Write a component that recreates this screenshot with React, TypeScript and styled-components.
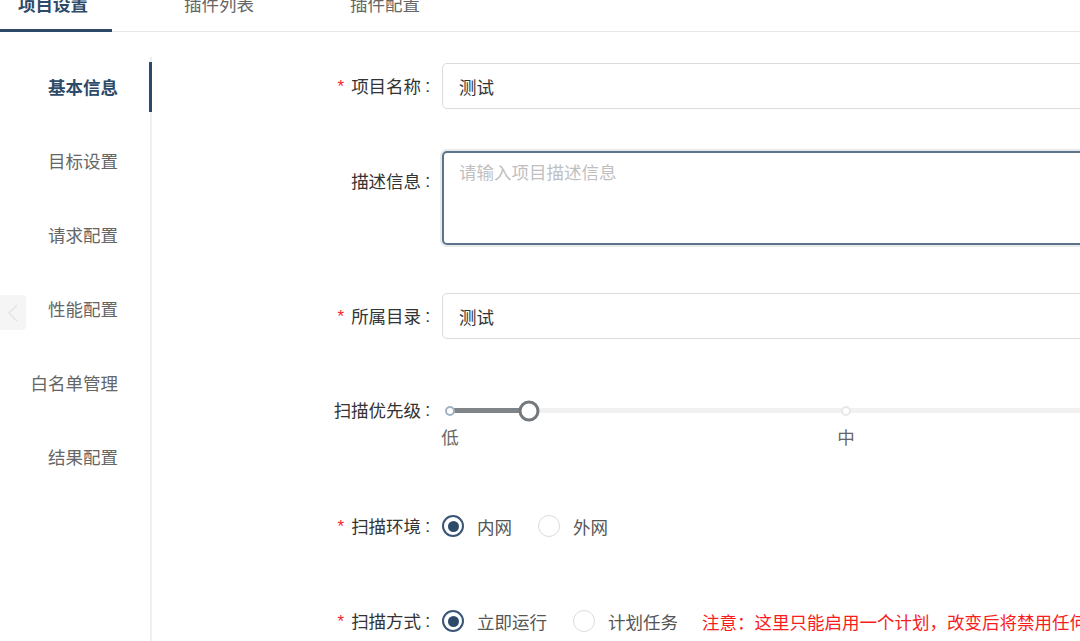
import React from "react";
import styled, { createGlobalStyle, css } from "styled-components";

const GlobalStyle = createGlobalStyle`
  html, body {
    margin: 0;
    padding: 0;
    background: #ffffff;
    overflow: hidden;
    font-family: "Noto Sans CJK SC", "Noto Sans", sans-serif;
  }
  * { box-sizing: border-box; }
`;

const ACCENT = "#2e4a69";
const FS = "17.5px";

const Page = styled.div`
  width: 1080px;
  height: 641px;
  display: flex;
  flex-direction: column;
  overflow: hidden;
`;

const TabBar = styled.div`
  display: flex;
  height: 46px;
  margin-top: -14px;
  border-bottom: 1px solid #e8e8e8;
  flex-shrink: 0;
`;

const Tab = styled.div<{ $active?: boolean }>`
  position: relative;
  padding: 0 24px 0 18px;
  margin-right: 54px;
  line-height: 35px;
  font-size: ${FS};
  color: ${(p) => (p.$active ? ACCENT : "#666")};
  font-weight: ${(p) => (p.$active ? 700 : 400)};
  white-space: nowrap;
  ${(p) =>
    p.$active &&
    css`
      &::after {
        content: "";
        position: absolute;
        left: 0;
        right: 0;
        bottom: -1px;
        height: 3px;
        background: ${ACCENT};
      }
    `}
`;

const Body = styled.div`
  position: relative;
  flex: 1;
  display: flex;
  padding-top: 25px;
`;

const CollapseButton = styled.div`
  position: absolute;
  left: 0;
  top: 263px;
  width: 26px;
  height: 35px;
  background: #f5f5f5;
  border-radius: 0 4px 4px 0;
  display: flex;
  align-items: center;
  justify-content: center;
`;

const SideMenu = styled.div`
  width: 152px;
  flex-shrink: 0;
  border-right: 2px solid #efefef;
  padding-top: 5px;
  display: flex;
  flex-direction: column;
  gap: 24px;
`;

const MenuItem = styled.div<{ $active?: boolean }>`
  position: relative;
  height: 50px;
  line-height: 50px;
  text-align: right;
  padding-right: 32px;
  font-size: ${FS};
  white-space: nowrap;
  color: ${(p) => (p.$active ? ACCENT : "#666")};
  font-weight: ${(p) => (p.$active ? 700 : 400)};
  ${(p) =>
    p.$active &&
    css`
      &::after {
        content: "";
        position: absolute;
        right: -2px;
        top: 0;
        width: 3px;
        height: 50px;
        background: ${ACCENT};
      }
    `}
`;

const Form = styled.div`
  display: flex;
  flex-direction: column;
  padding-top: 6px;
`;

const FormItem = styled.div<{ $mt: number }>`
  display: flex;
  align-items: flex-start;
  margin-top: ${(p) => p.$mt}px;
`;

const Label = styled.div<{ $lh: number; $pt?: number }>`
  width: 290px;
  flex-shrink: 0;
  display: flex;
  justify-content: flex-end;
  align-items: center;
  padding-right: 12px;
  padding-top: ${(p) => p.$pt ?? 0}px;
  line-height: ${(p) => p.$lh}px;
  height: ${(p) => p.$lh + (p.$pt ?? 0)}px;
  font-size: ${FS};
  color: #333;
  white-space: nowrap;
`;

const Required = styled.span`
  color: #f5222d;
  font-family: "Liberation Sans", sans-serif;
  font-size: 17px;
  margin-right: 7px;
  position: relative;
  top: 1px;
`;

const Colon = styled.span`
  margin-left: 4px;
  font-family: "Liberation Sans", sans-serif;
`;

const TextInput = styled.input`
  width: 800px;
  height: 46px;
  border: 1px solid #dcdcdc;
  border-radius: 5px;
  padding: 0 16px;
  font-size: ${FS};
  color: #333;
  font-family: "Noto Sans CJK SC", sans-serif;
  background: #fff;
  outline: none;
`;

const TextArea = styled.textarea`
  width: 800px;
  height: 94px;
  border: 2px solid #5d7389;
  box-shadow: 0 0 0 2px rgba(93, 115, 137, 0.15);
  border-radius: 5px;
  padding: 8px 15px;
  font-size: ${FS};
  line-height: 22px;
  font-family: "Noto Sans CJK SC", sans-serif;
  resize: none;
  outline: none;
  color: #333;
  &::placeholder {
    color: #bfbfbf;
  }
`;

const Slider = styled.div`
  width: 808px;
  padding: 0 8px;
`;

const RailBox = styled.div`
  position: relative;
  height: 40px;
`;

const Rail = styled.div`
  position: absolute;
  left: 0;
  right: 0;
  top: 18px;
  height: 5px;
  border-radius: 3px;
  background: #f1f1f1;
`;

const Track = styled.div`
  position: absolute;
  left: 0;
  top: 18px;
  height: 5px;
  border-radius: 3px;
  background: #7f8489;
`;

const Dot = styled.div<{ $active?: boolean }>`
  position: absolute;
  top: 20.5px;
  width: 10px;
  height: 10px;
  border-radius: 50%;
  background: #fff;
  border: 2px solid ${(p) => (p.$active ? "#a3b2c3" : "#e8e8e8")};
  transform: translate(-50%, -50%);
`;

const Handle = styled.div`
  position: absolute;
  top: 20.5px;
  width: 21px;
  height: 21px;
  border-radius: 50%;
  background: #fff;
  border: 3px solid #73787d;
  transform: translate(-50%, -50%);
`;

const Marks = styled.div`
  position: relative;
  height: 20px;
  margin-top: -3px;
`;

const Mark = styled.span`
  position: absolute;
  top: 0;
  line-height: 20px;
  font-size: ${FS};
  color: #666;
  transform: translateX(-50%);
  white-space: nowrap;
`;

const RadioGroup = styled.div`
  display: flex;
  align-items: center;
  height: 40px;
`;

const RadioOption = styled.label`
  display: inline-flex;
  align-items: center;
  gap: 13px;
  margin-right: 26px;
  font-size: ${FS};
  color: #555;
  white-space: nowrap;
`;

const RadioCircle = styled.span<{ $checked?: boolean }>`
  width: 22px;
  height: 22px;
  border-radius: 50%;
  border: ${(p) => (p.$checked ? `2px solid #3a5676` : `1.5px solid #dcdcdc`)};
  display: inline-flex;
  align-items: center;
  justify-content: center;
  background: #fff;
  &::after {
    content: "";
    display: ${(p) => (p.$checked ? "block" : "none")};
    width: 11px;
    height: 11px;
    border-radius: 50%;
    background: ${ACCENT};
  }
`;

const Warning = styled.span`
  font-size: ${FS};
  color: #f81d1d;
  white-space: nowrap;
  margin-left: -2px;
`;

const FieldLabel: React.FC<{ text: string; required?: boolean; lh: number; pt?: number }> = ({
  text,
  required,
  lh,
  pt,
}) => (
  <Label $lh={lh} $pt={pt}>
    {required && <Required>*</Required>}
    {text}
    <Colon>:</Colon>
  </Label>
);

const menu = ["基本信息", "目标设置", "请求配置", "性能配置", "白名单管理", "结果配置"];

export default function App() {
  const value = 10;
  return (
    <Page>
      <GlobalStyle />
      <TabBar>
        <Tab $active>项目设置</Tab>
        <Tab>插件列表</Tab>
        <Tab>插件配置</Tab>
      </TabBar>
      <Body>
        <CollapseButton>
          <svg width="12" height="20" viewBox="0 0 12 20">
            <path d="M10 2 L2 10 L10 18" fill="none" stroke="#e2e2e2" strokeWidth="1.3" />
          </svg>
        </CollapseButton>
        <SideMenu>
          {menu.map((m, i) => (
            <MenuItem key={m} $active={i === 0}>
              {m}
            </MenuItem>
          ))}
        </SideMenu>
        <Form>
          <FormItem $mt={0}>
            <FieldLabel text="项目名称" required lh={46} />
            <TextInput defaultValue="测试" />
          </FormItem>
          <FormItem $mt={42}>
            <FieldLabel text="描述信息" lh={46} pt={7} />
            <TextArea placeholder="请输入项目描述信息" />
          </FormItem>
          <FormItem $mt={48}>
            <FieldLabel text="所属目录" required lh={46} />
            <TextInput defaultValue="测试" />
          </FormItem>
          <FormItem $mt={51}>
            <FieldLabel text="扫描优先级" lh={40} />
            <Slider>
              <RailBox>
                <Rail />
                <Track style={{ width: `${value}%` }} />
                <Dot $active style={{ left: "0%" }} />
                <Dot style={{ left: "50%" }} />
                <Dot style={{ left: "100%" }} />
                <Handle style={{ left: `${value}%` }} />
              </RailBox>
              <Marks>
                <Mark style={{ left: "0%" }}>低</Mark>
                <Mark style={{ left: "50%" }}>中</Mark>
                <Mark style={{ left: "100%" }}>高</Mark>
              </Marks>
            </Slider>
          </FormItem>
          <FormItem $mt={59}>
            <FieldLabel text="扫描环境" required lh={40} />
            <RadioGroup>
              <RadioOption>
                <RadioCircle $checked />
                内网
              </RadioOption>
              <RadioOption>
                <RadioCircle />
                外网
              </RadioOption>
            </RadioGroup>
          </FormItem>
          <FormItem $mt={55}>
            <FieldLabel text="扫描方式" required lh={40} />
            <RadioGroup>
              <RadioOption>
                <RadioCircle $checked />
                立即运行
              </RadioOption>
              <RadioOption>
                <RadioCircle />
                计划任务
              </RadioOption>
              <Warning>注意：这里只能启用一个计划，改变后将禁用任何其他计划</Warning>
            </RadioGroup>
          </FormItem>
        </Form>
      </Body>
    </Page>
  );
}
